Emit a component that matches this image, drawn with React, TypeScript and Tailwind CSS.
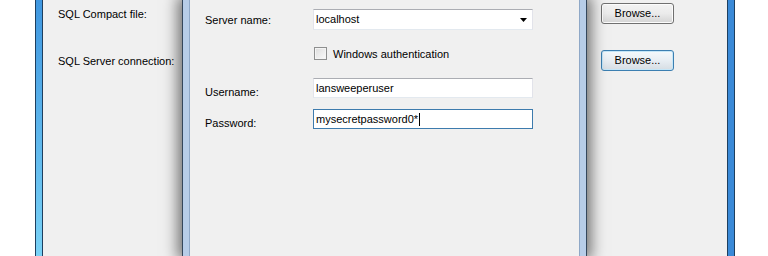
import React from "react";

const font = { fontFamily: '"Liberation Sans", Arial, sans-serif' };

function BrowseButton({ focused }: { focused?: boolean }) {
  return (
    <div
      className={`flex h-[21px] w-[73px] items-center justify-center rounded-[3px] border text-[11px] text-black ${
        focused
          ? "border-[#3c7fb1] bg-gradient-to-b from-[#f4f9fc] via-[#e8eef3] to-[#d6dde3] shadow-[inset_0_0_0_1px_#c5e6f7]"
          : "border-[#707070] bg-gradient-to-b from-[#f3f3f3] via-[#ebebeb] to-[#d4d4d4] shadow-[inset_0_0_0_1px_#fcfcfc]"
      }`}
    >
      Browse...
    </div>
  );
}

function TextBox({ value, focused, caret }: { value: string; focused?: boolean; caret?: boolean }) {
  return (
    <div
      className={`flex h-[20px] items-center border bg-white pl-[2px] text-[11px] text-black ${
        focused ? "border-[#3d7bad]" : "border-[#abadb3] border-x-[#e2e3ea] border-b-[#e3e9ef]"
      }`}
    >
      <span>{value}</span>
      {caret && <span className="ml-px h-[13px] w-px bg-black" />}
    </div>
  );
}

function ConnectionDialog() {
  return (
    <div className="absolute top-0 bottom-0 left-[139px] w-[405px] border-x border-[#34475c] bg-[#b7cde8] px-[6px] shadow-[0_0_14px_4px_rgba(0,0,0,0.55)]">
      <div className="h-full border-x border-[#8fa8c7] bg-[#f0f0f0] text-[11px] text-black">
        <div className="grid grid-cols-[108px_220px] pl-[15px]">
          {/* Server name */}
          <div className="mt-[9px] flex h-[21px] items-center pt-[2px]">Server name:</div>
          <div className="mt-[9px] flex h-[21px] items-center justify-between border border-[#abadb3] border-x-[#e2e3ea] border-b-[#e3e9ef] bg-white pl-[2px] pr-[5px]">
            <span>localhost</span>
            <svg width="7" height="4" viewBox="0 0 7 4">
              <polygon points="0,0 7,0 3.5,4" fill="#000" />
            </svg>
          </div>

          {/* Windows auth */}
          <div />
          <div className="mt-[17px] flex h-[13px] items-center gap-[6px] pl-px">
            <div className="h-[13px] w-[13px] border border-[#8e8f8f] bg-gradient-to-br from-[#dcdcdc] to-[#fbfbfb] shadow-[inset_0_0_0_1px_#f4f4f4]" />
            <span className="pt-px">Windows authentication</span>
          </div>

          {/* Username */}
          <div className="mt-[18px] flex h-[20px] items-center pt-[9px]">Username:</div>
          <div className="mt-[18px]">
            <TextBox value="lansweeperuser" />
          </div>

          {/* Password */}
          <div className="mt-[11px] flex h-[20px] items-center pt-[9px]">Password:</div>
          <div className="mt-[11px]">
            <TextBox value="mysecretpassword0*" focused caret />
          </div>
        </div>
      </div>
    </div>
  );
}

export default function App() {
  return (
    <div className="flex h-[256px] w-[768px] overflow-hidden bg-white" style={font}>
      <div className="w-[35px] shrink-0" />
      {/* left window frame */}
      <div className="w-[8px] shrink-0 border-x border-[#1e3f5f] bg-gradient-to-b from-[#3f97e0] to-[#79d2f6]" />

      {/* outer window content */}
      <div className="relative w-[684px] shrink-0 bg-[#f0f0f0] text-[11px] text-black">
        <div className="flex flex-col pl-[15px] pr-[53px]">
          <div className="mt-[3px] flex h-[21px] items-center justify-between">
            <span className="pt-[2px]">SQL Compact file:</span>
            <BrowseButton />
          </div>
          <div className="mt-[26px] flex h-[21px] items-center justify-between">
            <span className="pt-[2px]">SQL Server connection:</span>
            <BrowseButton focused />
          </div>
        </div>
        <ConnectionDialog />
      </div>

      {/* right window frame */}
      <div className="w-[8px] shrink-0 border-x border-[#1e3f5f] bg-[#3a8ad8]" />
      <div className="flex-1" />
    </div>
  );
}
